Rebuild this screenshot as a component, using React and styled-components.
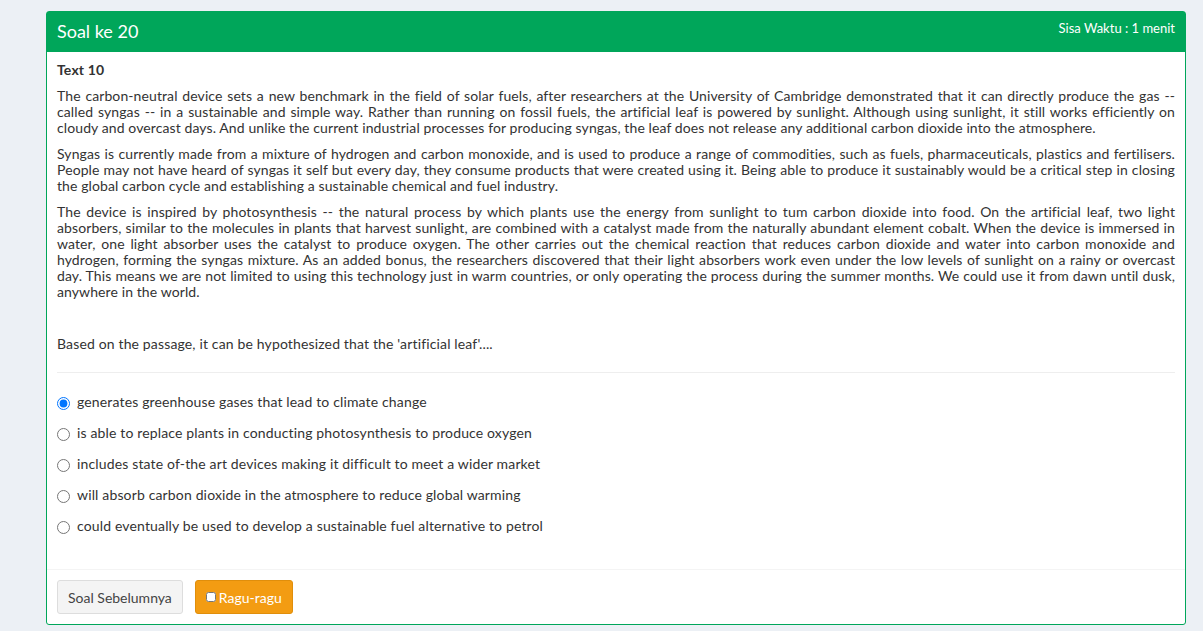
import React from 'react';
import styled, { createGlobalStyle } from 'styled-components';

const GlobalStyle = createGlobalStyle`
  html, body {
    margin: 0;
    padding: 0;
    background: #ecf0f5;
  }
  body {
    font-family: 'Lato', 'Liberation Sans', sans-serif;
    color: #333;
    font-size: 14px;
    letter-spacing: 0.15px;
  }
  * { box-sizing: border-box; }
`;

const Page = styled.div`
  min-height: 631px;
  padding: 11px 17px 7px 46px;
`;

const Box = styled.div`
  background: #fff;
  border: 1px solid #00a65a;
  border-radius: 3px;
`;

const BoxHeader = styled.div`
  position: relative;
  height: 40px;
  background: #00a65a;
  color: #fff;
  display: flex;
  align-items: center;
  padding: 0 10px;
`;

const Title = styled.h3`
  margin: 0;
  font-size: 18px;
  font-weight: 400;
  line-height: 1.1;
  letter-spacing: 0;
`;

const Timer = styled.div`
  position: absolute;
  top: 8px;
  right: 10px;
  font-size: 13px;
  letter-spacing: 0;
`;

const BoxBody = styled.div`
  padding: 10px 10px 33px;
`;

const Para = styled.p`
  margin: 0 0 10px;
  line-height: 16px;
  font-weight: ${(p) => (p.$bold ? 700 : 400)};
`;

/* the passage keeps the reference's line breaks, each full line justified */
const Line = styled.span`
  display: block;
  letter-spacing: 0.1px;
  text-align: justify;
  text-align-last: ${(p) => (p.$last ? 'left' : 'justify')};
`;

const Rule = styled.hr`
  border: 0;
  border-top: 1px solid #eee;
  margin: 20px 0 18px;
`;

const Options = styled.div`
  display: flex;
  flex-direction: column;
  gap: 10px;
`;

const Option = styled.label`
  display: flex;
  align-items: center;
  height: 21px;
  gap: 7px;
  cursor: pointer;

  input {
    margin: 3px 0 0 0;
    width: 13px;
    height: 13px;
  }
`;

const BoxFooter = styled.div`
  border-top: 1px solid #f4f4f4;
  padding: 10px;
  display: flex;
  gap: 12px;
`;

const Button = styled.button`
  height: 34px;
  padding: 0 10px;
  font-family: inherit;
  font-size: 14px;
  letter-spacing: 0;
  border-radius: 3px;
  display: inline-flex;
  align-items: center;
  gap: 3px;
  cursor: pointer;
  background: ${(p) => (p.$warning ? '#f39c12' : '#f4f4f4')};
  border: 1px solid ${(p) => (p.$warning ? '#e08e0b' : '#ddd')};
  color: ${(p) => (p.$warning ? '#fff' : '#444')};

  input {
    margin: 0;
    width: 10px;
    height: 10px;
  }
`;

const passage = [
  [
    'The carbon-neutral device sets a new benchmark in the field of solar fuels, after researchers at the University of Cambridge demonstrated that it can directly produce the gas --',
    'called syngas -- in a sustainable and simple way. Rather than running on fossil fuels, the artificial leaf is powered by sunlight. Although using sunlight, it still works efficiently on',
    'cloudy and overcast days. And unlike the current industrial processes for producing syngas, the leaf does not release any additional carbon dioxide into the atmosphere.',
  ],
  [
    'Syngas is currently made from a mixture of hydrogen and carbon monoxide, and is used to produce a range of commodities, such as fuels, pharmaceuticals, plastics and fertilisers.',
    'People may not have heard of syngas it self but every day, they consume products that were created using it. Being able to produce it sustainably would be a critical step in closing',
    'the global carbon cycle and establishing a sustainable chemical and fuel industry.',
  ],
  [
    'The device is inspired by photosynthesis -- the natural process by which plants use the energy from sunlight to tum carbon dioxide into food. On the artificial leaf, two light',
    'absorbers, similar to the molecules in plants that harvest sunlight, are combined with a catalyst made from the naturally abundant element cobalt. When the device is immersed in',
    'water, one light absorber uses the catalyst to produce oxygen. The other carries out the chemical reaction that reduces carbon dioxide and water into carbon monoxide and',
    'hydrogen, forming the syngas mixture. As an added bonus, the researchers discovered that their light absorbers work even under the low levels of sunlight on a rainy or overcast',
    'day. This means we are not limited to using this technology just in warm countries, or only operating the process during the summer months. We could use it from dawn until dusk,',
    'anywhere in the world.',
  ],
];

const options = [
  'generates greenhouse gases that lead to climate change',
  'is able to replace plants in conducting photosynthesis to produce oxygen',
  'includes state of-the art devices making it difficult to meet a wider market',
  'will absorb carbon dioxide in the atmosphere to reduce global warming',
  'could eventually be used to develop a sustainable fuel alternative to petrol',
];

export default function App() {
  return (
    <Page>
      <GlobalStyle />
      <Box>
        <BoxHeader>
          <Title>Soal ke 20</Title>
          <Timer>Sisa Waktu : 1 menit</Timer>
        </BoxHeader>
        <BoxBody>
          <Para $bold>Text 10</Para>
          {passage.map((lines, p) => (
            <Para key={p}>
              {lines.map((line, i) => (
                <Line key={i} $last={i === lines.length - 1}>
                  {line}{' '}
                </Line>
              ))}
            </Para>
          ))}
          <Para>&nbsp;</Para>
          <Para>Based on the passage, it can be hypothesized that the 'artificial leaf'....</Para>
          <Rule />
          <Options>
            {options.map((text, i) => (
              <Option key={i}>
                <input type="radio" name="jawaban" defaultChecked={i === 0} />
                <span>{text}</span>
              </Option>
            ))}
          </Options>
        </BoxBody>
        <BoxFooter>
          <Button>Soal Sebelumnya</Button>
          <Button $warning>
            <input type="checkbox" />
            Ragu-ragu
          </Button>
        </BoxFooter>
      </Box>
    </Page>
  );
}
